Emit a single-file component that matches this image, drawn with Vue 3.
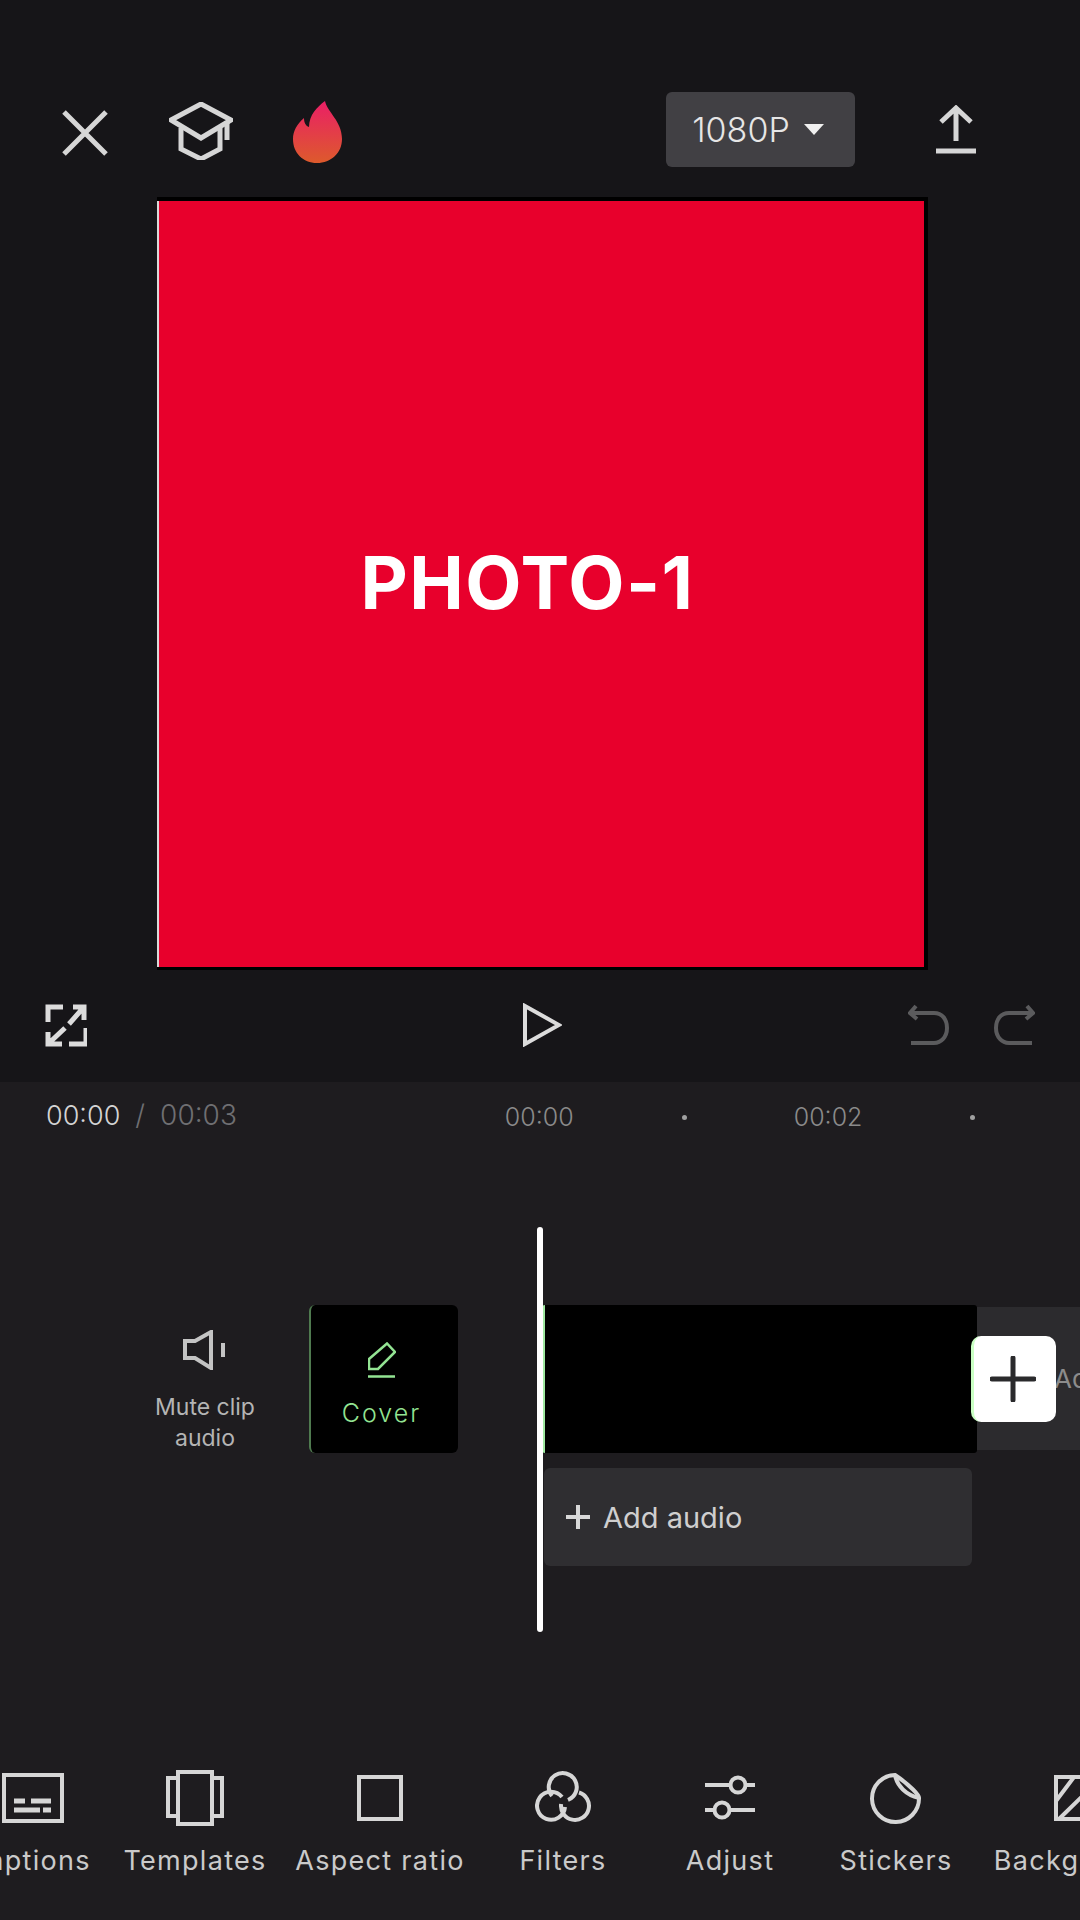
<template>
  <div class="app">
    <section class="stage">
      <header class="topbar">
        <svg class="ic-close" viewBox="0 0 48 48" width="48" height="48">
          <path d="M3 3L45 45M45 3L3 45" />
        </svg>
        <svg class="ic-cap" viewBox="0 0 64 58" width="64" height="58">
          <path d="M2 18L32 2L62 18L32 36Z" />
          <path d="M12 26V47L32 57L51 47V26" />
          <path d="M58 19V38" />
        </svg>
        <svg class="ic-flame" viewBox="0 0 49 62" width="49" height="62">
          <defs>
            <linearGradient id="flame" x1="0" y1="0" x2="0" y2="1">
              <stop offset="0" stop-color="#ea1f66" />
              <stop offset="1" stop-color="#dd5a2c" />
            </linearGradient>
          </defs>
          <path fill="url(#flame)" d="M32 0C34 11 49 20 49 38C49 52 38 62 24 62C10 62 0 52 0 38C0 30 4 23 11 17C11 22 13 25 16 26C16 14 24 6 32 0Z" />
        </svg>
        <button class="res-btn">
          <span>1080P</span>
          <i class="caret"></i>
        </button>
        <svg class="ic-upload" viewBox="0 0 40 49" width="40" height="49">
          <path d="M20 3V36M5 17L20 3L35 17" />
          <path class="thick" d="M0 46H40" />
        </svg>
      </header>

      <div class="canvas">
        <div class="photo"><span>PHOTO-1</span></div>
      </div>

      <div class="controls">
        <svg class="ic-line" viewBox="0 0 42 43" width="42" height="43">
          <path d="M18 3H3V18M41 24V40H24" />
          <path d="M28 3H39V16M39 3L24 20M3 28V40H17M3 40L20 24" />
        </svg>
        <svg class="ic-line play" viewBox="0 0 40 44" width="40" height="44">
          <path d="M3 3L37 22L3 41Z" />
        </svg>
        <div class="history">
          <svg class="ic-dim" viewBox="0 0 41 42" width="41" height="42">
            <path d="M8 2L2 9L9 15M2 9H26C34 9 39 15 39 24C39 33 33 39 26 39H3" />
          </svg>
          <svg class="ic-dim" viewBox="0 0 41 42" width="41" height="42">
            <path d="M33 2L39 9L32 15M39 9H15C7 9 2 15 2 24C2 33 8 39 15 39H38" />
          </svg>
        </div>
      </div>
    </section>

    <section class="panel">
      <div class="ruler">
        <span class="now">00:00</span>
        <span class="slash">/</span>
        <span class="total">00:03</span>
        <span class="tick first">00:00</span>
        <i class="dot"></i>
        <span class="tick">00:02</span>
        <i class="dot"></i>
      </div>

      <div class="playhead"></div>

      <div class="tracks">
        <div class="mute">
          <svg class="ic-mute" viewBox="0 0 44 40" width="44" height="40">
            <path d="M2 11H12L28 2V38L12 28H2Z" />
            <path d="M40 13V27" />
          </svg>
          <span>Mute clip<br />audio</span>
        </div>
        <div class="cover">
          <svg class="ic-pen" viewBox="0 0 28 36" width="28" height="36">
            <path d="M1 17L19 1.500L27 10L10 27H1Z" />
            <path d="M0 34.500H27" />
          </svg>
          <span>Cover</span>
        </div>
        <div class="clip"></div>
        <div class="ending">
          <span class="ending-label">Add</span>
          <div class="add-clip">
            <svg viewBox="0 0 46 46" width="46" height="46">
              <path d="M2 23H44M23 2V44" />
            </svg>
          </div>
        </div>
      </div>

      <div class="audio-row">
        <svg viewBox="0 0 24 24" width="24" height="24">
          <path d="M0 12H24M12 0V24" />
        </svg>
        <span>Add audio</span>
      </div>

      <nav class="toolbar">
        <div class="tool t-captions">
          <svg viewBox="0 0 62 50" width="62" height="50">
            <rect x="2" y="2" width="58" height="46" />
            <path class="thin" d="M12 28H23M29 28H49M12 37H38M41 37H49" />
          </svg>
          <span>Captions</span>
        </div>
        <div class="tool t-templates">
          <svg viewBox="0 0 58 56" width="58" height="56">
            <rect x="12" y="2" width="34" height="52" />
            <path d="M12 8H2V46H12M46 8H56V46H46" />
          </svg>
          <span>Templates</span>
        </div>
        <div class="tool t-aspect">
          <svg viewBox="0 0 46 46" width="46" height="46">
            <rect x="2" y="2" width="42" height="42" />
          </svg>
          <span>Aspect ratio</span>
        </div>
        <div class="tool t-filters">
          <svg viewBox="0 0 56 56" width="56" height="56">
            <path d="M17 26A14 14 0 1 1 33 30" />
            <path d="M27 27A14 14 0 1 0 30 37" />
            <path d="M44 22.500A14 14 0 1 1 26.100 34" />
          </svg>
          <span>Filters</span>
        </div>
        <div class="tool t-adjust">
          <svg viewBox="0 0 50 46" width="50" height="46">
            <path d="M0 10H25M41 10H50M0 35H9M25 35H50" />
            <circle cx="33" cy="10" r="7.500" />
            <circle cx="17" cy="35" r="7.500" />
          </svg>
          <span>Adjust</span>
        </div>
        <div class="tool t-stickers">
          <svg viewBox="0 0 52 52" width="52" height="52">
            <path d="M25 3A23.500 23.500 0 1 0 49 26C50 24 40 13 25 3Z" />
            <path d="M25 3C27 14 36 23 49 26" />
          </svg>
          <span>Stickers</span>
        </div>
        <div class="tool t-background">
          <svg viewBox="0 0 46 46" width="46" height="46">
            <rect x="2" y="2" width="42" height="42" />
            <path d="M2 26L20 2M5 44L44 6" />
          </svg>
          <span>Background</span>
        </div>
      </nav>
    </section>
  </div>
</template>

<script setup>
</script>

<style>
html,
body {
  margin: 0;
  background: #1c1b1e;
}
</style>

<style scoped>
.app {
  width: 1080px;
  height: 1920px;
  overflow: hidden;
  font-family: "Inter", "Liberation Sans", sans-serif;
  position: relative;
}

svg {
  display: block;
  flex: none;
  fill: none;
}

.stage {
  height: 1082px;
  background: #161518;
  box-sizing: border-box;
  padding-top: 92px;
}

.topbar {
  display: flex;
  align-items: center;
  height: 75px;
  padding: 0 104px 0 61px;
}

.topbar svg path {
  stroke: #d6d6d6;
  stroke-width: 5;
}

.ic-close {
  margin-top: 6px;
}

.ic-cap {
  margin-left: 60px;
  margin-top: 2px;
}

.ic-flame {
  margin-left: 60px;
  margin-top: 4px;
}

.topbar .ic-flame path {
  stroke: none;
}

.res-btn {
  margin-left: auto;
  width: 189px;
  height: 75px;
  border: 0;
  border-radius: 6px;
  background: #414044;
  color: #e6e6e6;
  font: 300 34px "Inter", "Liberation Sans", sans-serif;
  display: flex;
  align-items: center;
  justify-content: center;
  gap: 14px;
  padding: 0 5px 0 0;
}

.caret {
  width: 0;
  height: 0;
  border-left: 10px solid transparent;
  border-right: 10px solid transparent;
  border-top: 11px solid #f0f0f0;
}

.ic-upload {
  margin-left: 81px;
}

.topbar .ic-upload .thick {
  stroke-width: 5;
}

.canvas {
  margin: 30px 0 0 157px;
  width: 771px;
  height: 773px;
  background: #000;
  box-sizing: border-box;
  padding: 4px 4px 3px 0;
}

.photo {
  height: 100%;
  background: #e8002c;
  border-left: 2px solid #d8d8d8;
  display: flex;
  align-items: center;
  justify-content: center;
  padding-right: 28px;
  color: #fff;
  font: 700 73px "Inter", "Liberation Sans", sans-serif;
  letter-spacing: 1.400px;
}

.photo span {
  margin-top: -4px;
}

.controls {
  display: grid;
  grid-template-columns: 1fr auto 1fr;
  align-items: center;
  margin-top: 33px;
  padding: 0 45px;
}

.ic-line path {
  stroke: #dcdcdc;
  stroke-width: 5;
}

.play {
  margin-left: 3px;
}

.play path {
  stroke-width: 4;
}

.history {
  display: flex;
  justify-content: flex-end;
  gap: 45px;
}

.ic-dim path {
  stroke: #5b5b5d;
  stroke-width: 4;
}

.panel {
  position: relative;
  height: 838px;
  background: #1e1c1f;
}

.ruler {
  display: flex;
  align-items: center;
  height: 66px;
  padding-left: 46px;
  font-weight: 300;
}

.now {
  font-size: 27px;
  color: #d4d4d4;
}

.slash {
  font-size: 28px;
  color: #6f6f72;
  margin-left: 15px;
}

.total {
  font-size: 28px;
  color: #6f6f72;
  margin-left: 15px;
}

.tick {
  font-size: 25px;
  color: #8a8a8a;
  margin-top: 4px;
  margin-left: 107px;
}

.tick.first {
  margin-left: 268px;
}

.dot {
  width: 5px;
  height: 5px;
  border-radius: 50%;
  background: #a0a0a0;
  margin-left: 108px;
  margin-top: 4px;
}

.playhead {
  position: absolute;
  left: 537px;
  top: 145px;
  width: 6px;
  height: 405px;
  border-radius: 3px;
  background: #fff;
}

.tracks {
  display: flex;
  margin-top: 157px;
  height: 148px;
}

.mute {
  flex: none;
  margin-left: 145px;
  width: 120px;
  display: flex;
  flex-direction: column;
  align-items: center;
  padding-top: 25px;
  color: #b4b4b4;
  font-size: 23px;
  line-height: 31px;
  text-align: center;
  white-space: nowrap;
}

.ic-mute {
  margin-bottom: 22px;
}

.ic-mute path {
  stroke: #c4c4c4;
  stroke-width: 4;
}

.cover {
  flex: none;
  margin-left: 44px;
  width: 149px;
  box-sizing: border-box;
  background: #000;
  border-left: 2px solid #4f7a4f;
  border-radius: 6px;
  display: flex;
  flex-direction: column;
  align-items: center;
  padding: 37px 6px 0 0;
  color: #93e493;
  font-size: 25px;
  font-weight: 300;
  letter-spacing: 2px;
}

.ic-pen {
  margin-bottom: 20px;
}

.ic-pen path {
  stroke: #93e493;
  stroke-width: 2.500;
}

.clip {
  flex: none;
  margin-left: 84px;
  width: 435px;
  box-sizing: border-box;
  background: #000;
  border-left: 3px solid #9fe8a0;
  border-radius: 3px;
}

.ending {
  position: relative;
  flex: none;
  width: 103px;
  margin: 2px 0 3px;
  background: #2c2b2e;
  display: flex;
  align-items: center;
}

.ending-label {
  margin-left: 77px;
  color: #8c8c8c;
  font-size: 26px;
}

.add-clip {
  position: absolute;
  left: -6px;
  top: 29px;
  width: 85px;
  height: 86px;
  box-sizing: border-box;
  background: #fff;
  border-left: 3px solid #caffc4;
  border-radius: 10px;
  display: flex;
  align-items: center;
  justify-content: center;
  padding-right: 4px;
}

.add-clip path {
  stroke: #2a2a2c;
  stroke-width: 5;
  stroke-linecap: round;
}

.audio-row {
  margin: 15px 0 0 544px;
  width: 428px;
  height: 98px;
  background: #2f2e31;
  border-radius: 6px;
  display: flex;
  align-items: center;
  gap: 13px;
  padding-left: 22px;
  box-sizing: border-box;
  color: #cfcfcf;
  font-size: 29px;
}

.audio-row path {
  stroke: #d8d8d8;
  stroke-width: 4;
}

.toolbar {
  display: flex;
  margin: 204px 0 0 -44px;
}

.tool {
  flex: none;
  display: flex;
  flex-direction: column;
  align-items: center;
  color: #cacaca;
  font-size: 27px;
  letter-spacing: 1.300px;
  white-space: nowrap;
}

.tool svg {
  height: 56px;
  margin-bottom: 18px;
}

.tool svg path,
.tool svg rect,
.tool svg circle {
  stroke: #d6d6d6;
  stroke-width: 4;
}

.tool svg .thin {
  stroke-width: 5;
}

.t-captions {
  width: 154px;
}

.t-captions span {
  margin-right: 8px;
}

.t-templates {
  width: 170px;
}

.t-aspect {
  width: 200px;
}

.t-filters {
  width: 166px;
}

.t-adjust {
  width: 168px;
}

.t-stickers {
  width: 164px;
}

.t-background {
  width: 198px;
}
</style>
